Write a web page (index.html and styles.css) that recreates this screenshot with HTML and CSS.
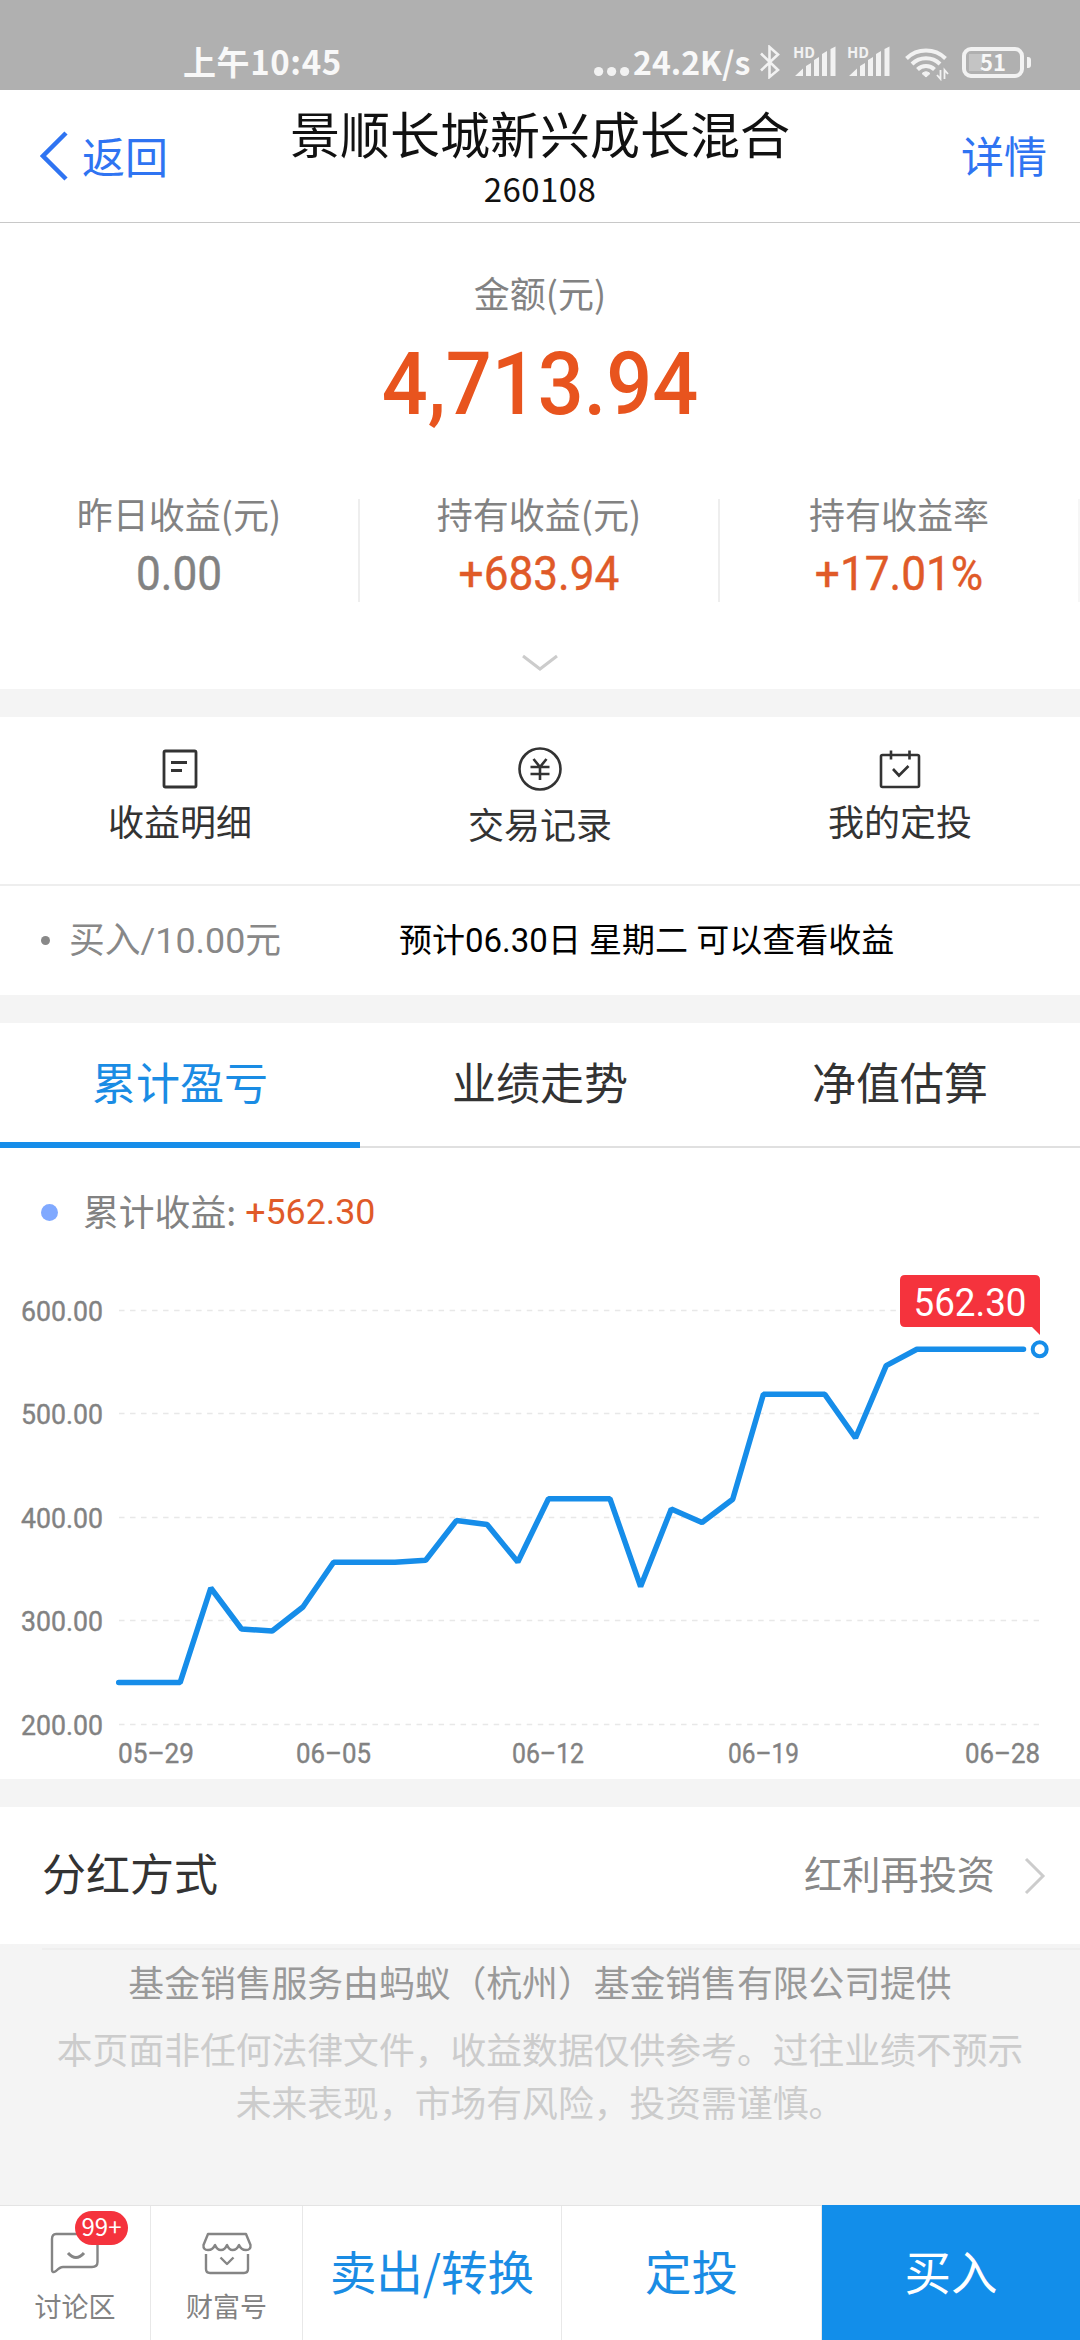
FILE: index.html
```html
<!DOCTYPE html>
<html lang="zh-CN">
<head>
    <meta charset="UTF-8">
    <meta name="viewport" content="width=device-width, initial-scale=1.0">
    <title>景顺长城新兴成长混合</title>
    <link rel="stylesheet" href="styles.css">
</head>
<body>
    <div class="status-bar">
        <span class="time">上午10:45</span>
        <div class="status-right">
            <svg class="dots" width="36" height="34" viewBox="0 0 36 34" fill="#f2f2f2">
                <circle cx="4.6" cy="26.5" r="4.6"/><circle cx="17.6" cy="26.5" r="4.6"/><circle cx="30.6" cy="26.5" r="4.6"/>
            </svg>
            <span class="speed">24.2K/s</span>
            <svg class="bluetooth" width="22" height="34" viewBox="0 0 22 34" fill="none" stroke="#f2f2f2" stroke-width="2.6">
                <path d="M2 8.5L19 25L10.5 32V2L19 9.5L2 25.5"/>
            </svg>
            <svg class="signal" width="42" height="34" viewBox="0 0 42 34" fill="#f2f2f2">
                <text x="-1" y="12.5" class="hd">HD</text>
                <path d="M1 31L9 23.5V31ZM12 31V21L17 18V31ZM20 31V15L25 12V31ZM28 31V9L33 6V31ZM36.5 31V4L41.5 1.5V31Z"/>
            </svg>
            <svg class="signal" width="42" height="34" viewBox="0 0 42 34" fill="#f2f2f2">
                <text x="-1" y="12.5" class="hd">HD</text>
                <path d="M1 31L9 23.5V31ZM12 31V21L17 18V31ZM20 31V15L25 12V31ZM28 31V9L33 6V31ZM36.5 31V4L41.5 1.5V31Z"/>
            </svg>
            <svg class="wifi" width="44" height="36" viewBox="0 0 44 36" fill="none" stroke="#f2f2f2" stroke-width="4">
                <path d="M1.5 13.5A28 28 0 0 1 40.5 13.5"/>
                <path d="M7 19A20 20 0 0 1 35 19"/>
                <path d="M12.5 24.5A12 12 0 0 1 29.5 24.5"/>
                <path d="M21 32L17 28.5Q21 25 25 28.5Z" fill="#f2f2f2" stroke-width="1"/>
                <path d="M35.5 25V34L32 30M39.5 34V25L43 29" stroke-width="1.8"/>
            </svg>
            <div class="battery">51</div>
        </div>
    </div>

    <div class="header">
        <div class="back">
            <svg width="28" height="50" viewBox="0 0 28 50" fill="none" stroke="#2f74f2" stroke-width="4.5">
                <path d="M26 2L3 25L26 48"/>
            </svg>
            <span>返回</span>
        </div>
        <div class="title">
            <h1>景顺长城新兴成长混合</h1>
            <p>260108</p>
        </div>
        <div class="detail">详情</div>
    </div>

    <div class="summary">
        <div class="label">金额(元)</div>
        <div class="amount">4,713.94</div>
        <div class="stats">
            <div class="stat">
                <div class="label">昨日收益(元)</div>
                <div class="value gray">0.00</div>
            </div>
            <div class="stat">
                <div class="label">持有收益(元)</div>
                <div class="value">+683.94</div>
            </div>
            <div class="stat">
                <div class="label">持有收益率</div>
                <div class="value">+17.01%</div>
            </div>
        </div>
        <svg class="expand" width="36" height="18" viewBox="0 0 36 18" fill="none" stroke="#ccc" stroke-width="3">
            <path d="M1 2L18 15L35 2"/>
        </svg>
    </div>

    <div class="links">
        <div class="link">
            <svg width="44" height="46" viewBox="0 0 44 46" fill="none" stroke="#333" stroke-width="2.8">
                <rect x="6" y="5" width="32" height="36" rx="1.5"/>
                <path d="M13 16.5H29M13 24.5H24"/>
            </svg>
            <span>收益明细</span>
        </div>
        <div class="link lower">
            <svg width="44" height="46" viewBox="0 0 44 46" fill="none" stroke="#333" stroke-width="2.6">
                <circle cx="22" cy="23" r="20.5"/>
                <path d="M15.5 13L22 21L28.5 13M22 20V34M12.5 21H31.5M12.5 28H31.5"/>
            </svg>
            <span>交易记录</span>
        </div>
        <div class="link">
            <svg width="44" height="46" viewBox="0 0 44 46" fill="none" stroke="#333" stroke-width="2.6">
                <rect x="3" y="9" width="38" height="32" rx="1.5"/>
                <path d="M13 4.5V13.5M31.5 4.5V13.5M15 23L21 29.5L30.5 20"/>
            </svg>
            <span>我的定投</span>
        </div>
    </div>

    <div class="notice">
        <i class="bullet"></i>
        <span class="trade">买入/10.00元</span>
        <span class="expect">预计06.30日 星期二 可以查看收益</span>
    </div>

    <div class="tabs">
        <div class="tab active">累计盈亏</div>
        <div class="tab">业绩走势</div>
        <div class="tab">净值估算</div>
    </div>

    <div class="chart-box">
        <div class="legend">
            <i class="dot"></i>
            <span>累计收益:</span>
            <span class="profit">+562.30</span>
        </div>
        <svg class="chart" width="1080" height="524" viewBox="0 1255 1080 524">
            <g class="grid">
                <path d="M119 1310.5H1039M119 1413.5H1039M119 1517.5H1039M119 1620.5H1039M119 1724.5H1039"/>
            </g>
            <g class="axis">
                <text x="21" y="1320.5" textLength="82" lengthAdjust="spacingAndGlyphs">600.00</text>
                <text x="21" y="1424" textLength="82" lengthAdjust="spacingAndGlyphs">500.00</text>
                <text x="21" y="1528" textLength="82" lengthAdjust="spacingAndGlyphs">400.00</text>
                <text x="21" y="1631" textLength="82" lengthAdjust="spacingAndGlyphs">300.00</text>
                <text x="21" y="1735" textLength="82" lengthAdjust="spacingAndGlyphs">200.00</text>
                <text x="118" y="1763" textLength="76" lengthAdjust="spacingAndGlyphs">05–29</text>
                <text x="296" y="1763" textLength="75" lengthAdjust="spacingAndGlyphs">06–05</text>
                <text x="512" y="1763" textLength="72" lengthAdjust="spacingAndGlyphs">06–12</text>
                <text x="728" y="1763" textLength="71" lengthAdjust="spacingAndGlyphs">06–19</text>
                <text x="965" y="1763" textLength="75" lengthAdjust="spacingAndGlyphs">06–28</text>
            </g>
            <polyline class="line" points="118.7,1682.6 149.4,1682.6 180.1,1682.6 210.8,1588 241.5,1629 272.2,1631 302.9,1607 333.6,1562.3 364.3,1562.3 395,1562.3 425.7,1560.2 456.4,1520.6 487.1,1524.5 517.8,1562 548.5,1498.7 579.2,1498.7 609.9,1498.7 640.6,1586.5 671.3,1509 702,1522.5 732.7,1499.2 763.4,1394.3 794.1,1394.3 824.8,1394.3 855.5,1438 886.2,1365.6 916.9,1349.3 1023.5,1349.3"/>
            <circle class="end" cx="1039.7" cy="1349.3" r="7"/>
            <path fill="#f5333d" d="M905 1275H1035Q1040 1275 1040 1280V1335L1032 1327H905Q900 1327 900 1322V1280Q900 1275 905 1275Z"/>
            <text class="tip" x="913.5" y="1315.5" textLength="113" lengthAdjust="spacingAndGlyphs">562.30</text>
        </svg>
    </div>

    <div class="dividend">
        <span class="name">分红方式</span>
        <span class="mode">红利再投资</span>
        <svg width="22" height="38" viewBox="0 0 22 38" fill="none" stroke="#ccc" stroke-width="3">
            <path d="M2 2L19 19L2 36"/>
        </svg>
    </div>

    <div class="footer">
        <p class="provider">基金销售服务由蚂蚁（杭州）基金销售有限公司提供</p>
        <p class="disclaimer">本页面非任何法律文件，收益数据仅供参考。过往业绩不预示<br>未来表现，市场有风险，投资需谨慎。</p>
    </div>

    <div class="bottom-bar">
        <div class="small">
            <svg width="52" height="46" viewBox="0 0 52 46" fill="none" stroke="#858585" stroke-width="2.4">
                <path d="M7 4H43Q48.5 4 48.5 9V32Q48.5 37 43 37H14Q11 37 7 41Q3 43.5 3 40V9Q3 4 7 4Z"/>
                <path d="M19 23Q27 32 35 23" stroke-width="3"/>
            </svg>
            <span>讨论区</span>
            <b class="badge">99+</b>
        </div>
        <div class="small">
            <svg width="52" height="46" viewBox="0 0 52 46" fill="none" stroke="#858585" stroke-width="2.4" stroke-linejoin="round">
                <path d="M7 4H45L49.5 15Q50 20 45 20Q40 20 38 15Q36 20 31.5 20Q28 20 26 15Q24 20 20 20Q16 20 14 15Q12 20 7 20Q2 20 2.5 15Z"/>
                <path d="M5 24V39Q5 43 9 43H43Q47 43 47 39V24M19.5 27.5L26 34L32.5 27.5"/>
            </svg>
            <span>财富号</span>
        </div>
        <div class="action">卖出/转换</div>
        <div class="action">定投</div>
        <div class="action buy">买入</div>
    </div>
</body>
</html>
```
FILE: styles.css
```css
* {
    margin: 0;
    padding: 0;
    box-sizing: border-box;
}

body {
    width: 1080px;
    height: 2340px;
    overflow: hidden;
    display: flex;
    flex-direction: column;
    background: #f4f4f4;
    font-family: 'Noto Sans CJK SC', sans-serif;
    color: #333;
}

svg {
    display: block;
    flex-shrink: 0;
}

/* Status bar */
.status-bar {
    height: 90px;
    background: #b0b0b0;
    color: #f8f8f8;
    display: flex;
    justify-content: space-between;
    padding: 45px 56px 0 183px;
    font-weight: 700;
}

.time {
    font-size: 33px;
    line-height: 33px;
    letter-spacing: 0.6px;
}

.status-right {
    display: flex;
}

.speed {
    font-size: 32px;
    line-height: 32px;
    width: 125px;
    padding-left: 3px;
}

.bluetooth {
    margin: 0 13px 0 4px;
}

.signal {
    margin-right: 12px;
    overflow: visible;
}

.hd {
    font: 700 15px 'Noto Sans CJK SC', sans-serif;
}

.wifi {
    margin: 0 13px 0 3px;
}

.battery {
    position: relative;
    width: 62px;
    height: 31px;
    margin-top: 2px;
    border: 4px solid #f2f2f2;
    border-radius: 9px;
    font-size: 22px;
    line-height: 21px;
    text-align: center;
    background: linear-gradient(#c4c4c4, #c4c4c4) 3px 3px / 13px 17px no-repeat;
}

.battery::after {
    content: '';
    position: absolute;
    right: -11px;
    top: 6px;
    width: 4px;
    height: 11px;
    border-radius: 0 3px 3px 0;
    background: #f2f2f2;
}

/* Header */
.header {
    height: 133px;
    background: #fff;
    border-bottom: 1px solid #c8c8c8;
    display: grid;
    grid-template-columns: 240px 1fr 240px;
    color: #2f74f2;
    font-size: 43px;
    line-height: 60px;
}

.back {
    display: flex;
    padding: 35px 0 0 40px;
}

.back svg {
    margin: 6px 14px 0 0;
}

.detail {
    padding: 34px 33px 0 0;
    text-align: right;
}

.title {
    color: #111;
    text-align: center;
    padding-top: 12px;
}

.title h1 {
    font-size: 50px;
    font-weight: 400;
    line-height: 60px;
    white-space: nowrap;
}

.title p {
    font-size: 33px;
    line-height: 40px;
    padding-top: 6px;
    letter-spacing: 0.4px;
}

/* Summary */
.summary {
    height: 466px;
    background: #fff;
    text-align: center;
    padding-top: 46px;
}

.label {
    font-size: 36px;
    line-height: 46px;
    color: #828282;
}

.amount,
.value {
    font-family: Roboto, sans-serif;
    transform: scaleX(0.92);
}

.amount {
    font-size: 88px;
    font-weight: 500;
    line-height: 100px;
    margin-top: 19px;
    color: #e8541e;
}

.stats {
    display: grid;
    grid-template-columns: repeat(3, 1fr);
    margin-top: 65px;
    height: 99px;
}

.stat {
    border-right: 2px solid #eee;
}

.stat:last-child {
    border-color: #f6f6f6;
}

.stat .label {
    margin-top: -9px;
}

.value {
    font-size: 48px;
    line-height: 56px;
    margin-top: 10px;
    color: #e05a28;
    -webkit-text-stroke: 0.4px;
}

.value.gray {
    color: #828282;
}

.expand {
    margin: 56px auto 0;
}

/* Shortcuts */
.links {
    height: 169px;
    margin-top: 28px;
    background: #fff;
    border-bottom: 2px solid #eee;
    display: grid;
    grid-template-columns: repeat(3, 1fr);
}

.link {
    display: flex;
    flex-direction: column;
    align-items: center;
    padding-top: 29px;
    font-size: 36px;
    line-height: 46px;
}

.link span {
    margin-top: 5px;
}

.link.lower span {
    margin-top: 8px;
}

.notice {
    height: 109px;
    background: #fff;
    display: flex;
    align-items: center;
    padding-left: 41px;
    font-family: Roboto, 'Noto Sans CJK SC', sans-serif;
}

.bullet {
    width: 9px;
    height: 9px;
    border-radius: 50%;
    background: #888;
}

.trade {
    width: 330px;
    margin-left: 19px;
    font-size: 35.8px;
    line-height: 44px;
    color: #888;
}

.expect {
    font-size: 33px;
    line-height: 44px;
    color: #000;
}

/* Tabs */
.tabs {
    height: 125px;
    margin-top: 28px;
    background: #fff;
    border-bottom: 2px solid #e0e0e0;
    display: grid;
    grid-template-columns: repeat(3, 1fr);
    text-align: center;
    font-size: 44px;
    line-height: 116px;
}

.tab {
    height: 125px;
}

.tab.active {
    color: #1a8ce4;
    border-bottom: 6px solid #168de9;
}

/* Chart */
.chart-box {
    height: 631px;
    background: #fff;
}

.legend {
    height: 107px;
    padding: 16px 0 0 41px;
    display: flex;
    align-items: center;
    font-size: 35.8px;
    line-height: 46px;
    color: #828282;
}

.dot {
    width: 17px;
    height: 17px;
    margin: 5px 25px 0 0;
    border-radius: 50%;
    background: #80a9ff;
}

.profit {
    margin: 4px 0 0 9px;
    font-family: Roboto, sans-serif;
    color: #e05a28;
}

.grid path {
    stroke: #e8e8e8;
    stroke-width: 1.5;
    stroke-dasharray: 5.5 5.52;
}

.axis text {
    font: 400 28px Roboto, sans-serif;
    fill: #828282;
    stroke: #828282;
    stroke-width: 0.4;
}

.line {
    fill: none;
    stroke: #168de9;
    stroke-width: 5.5;
    stroke-linecap: round;
    stroke-linejoin: bevel;
}

.end {
    fill: #fff;
    stroke: #168de9;
    stroke-width: 4;
}

.tip {
    font: 400 38px Roboto, sans-serif;
    fill: #fff;
}

/* Dividend row */
.dividend {
    height: 137px;
    margin-top: 28px;
    padding: 0 34px 0 42px;
    background: #fff;
    display: flex;
    align-items: center;
}

.name {
    flex: 1;
    font-size: 44px;
    line-height: 132px;
    margin-top: -8px;
}

.mode {
    font-size: 38.2px;
    line-height: 132px;
    margin: -6px 29px 0 0;
    color: #888;
}

/* Footer */
.footer {
    flex: 1;
    margin-top: 4px;
    padding-top: 10px;
    background: linear-gradient(#eee, #eee) 42px 0 / 100% 2px no-repeat;
    text-align: center;
    font-size: 35.8px;
}

.provider {
    line-height: 46px;
    color: #999;
}

.disclaimer {
    margin-top: 18px;
    line-height: 53px;
    color: #ccc;
}

/* Bottom bar */
.bottom-bar {
    height: 135px;
    background: #fff;
    border-top: 1px solid #e4e4e4;
    display: grid;
    grid-template-columns: 151px 152px 259px 260px 1fr;
}

.small {
    position: relative;
    border-right: 1px solid #e8e8e8;
    display: flex;
    flex-direction: column;
    align-items: center;
    padding-top: 24px;
    font-size: 27px;
    line-height: 36px;
    color: #828282;
}

.small span {
    margin-top: 12px;
}

.badge {
    position: absolute;
    left: 75px;
    top: 5px;
    width: 53px;
    height: 34px;
    border-radius: 17px;
    background: #f5333d;
    color: #fff;
    font: 400 24px/30px 'Noto Sans CJK SC', sans-serif;
    text-align: center;
}

.action {
    border-right: 1px solid #e8e8e8;
    text-align: center;
    font-size: 46.5px;
    line-height: 127px;
    color: #1a8ce4;
}

.action.buy {
    margin-top: -1px;
    border-right: 0;
    background: #128eea;
    color: #fff;
    line-height: 129px;
}
```
